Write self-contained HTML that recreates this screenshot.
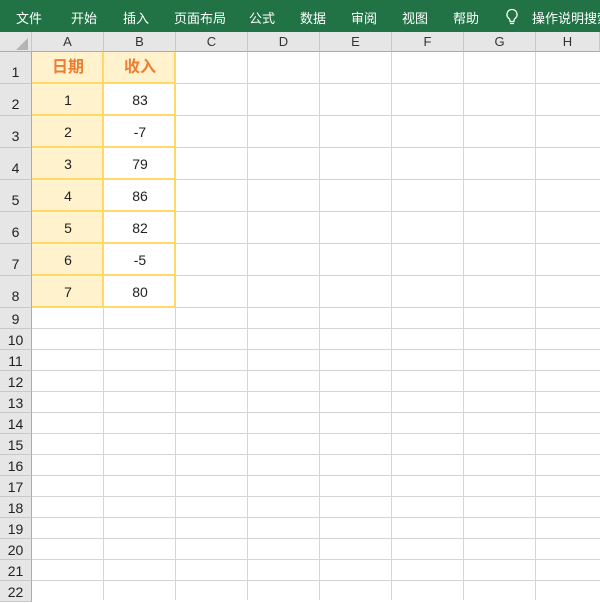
<!DOCTYPE html>
<html><head><meta charset="utf-8"><style>
*{margin:0;padding:0;box-sizing:border-box}
body{width:600px;height:600px;overflow:hidden;background:#fff;position:relative;font-family:"Liberation Sans","Noto Sans CJK SC",sans-serif}
.rib{position:absolute;left:0;top:0;width:600px;height:32px;background:#217346;color:#fff;font-size:13px}
.rib span{position:absolute;top:8px;white-space:nowrap}
.ab{position:absolute}
.ch{position:absolute;top:32px;height:20px;background:#e6e6e6;border-right:1px solid #c8c8c8;border-bottom:1px solid #ababab;text-align:center;font-size:13px;line-height:20px;color:#333}
.rh{position:absolute;left:0;width:32px;background:#e6e6e6;border-right:1px solid #ababab;border-bottom:1px solid #c8c8c8;text-align:center;font-size:14px;color:#222}
.vl{position:absolute;top:52px;width:1px;height:548px;background:#d4d4d4}
.hl{position:absolute;left:32px;width:568px;height:1px;background:#d4d4d4}
.c{position:absolute;text-align:center;font-size:14px;color:#222;line-height:30px}
</style></head><body>
<div class="rib">
<span style="left:16px">文件</span><span style="left:71px">开始</span><span style="left:123px">插入</span><span style="left:174px">页面布局</span><span style="left:249px">公式</span><span style="left:300px">数据</span><span style="left:351px">审阅</span><span style="left:402px">视图</span><span style="left:453px">帮助</span>
<svg class="ab" style="left:505px;top:8px" width="14" height="18" viewBox="0 0 14 18"><path d="M7 1.5a5 5 0 0 0-3 9c.6.5 1 1.2 1 2v1h4v-1c0-.8.4-1.5 1-2a5 5 0 0 0-3-9zM5 15.5h4" fill="none" stroke="#fff" stroke-width="1.3"/></svg>
<span style="left:532px">操作说明搜索</span>
</div>
<div class="ch" style="left:0;width:32px;background:#e6e6e6"><svg class="ab" style="left:16px;top:6px" width="12" height="12"><path d="M12 0V12H0Z" fill="#b4b4b4"/></svg></div>
<div class="ch" style="left:32px;width:72px">A</div>
<div class="ch" style="left:104px;width:72px">B</div>
<div class="ch" style="left:176px;width:72px">C</div>
<div class="ch" style="left:248px;width:72px">D</div>
<div class="ch" style="left:320px;width:72px">E</div>
<div class="ch" style="left:392px;width:72px">F</div>
<div class="ch" style="left:464px;width:72px">G</div>
<div class="ch" style="left:536px;width:64px">H</div>
<!-- gridlines -->
<div class="vl" style="left:103px"></div><div class="vl" style="left:175px"></div><div class="vl" style="left:247px"></div><div class="vl" style="left:319px"></div><div class="vl" style="left:391px"></div><div class="vl" style="left:463px"></div><div class="vl" style="left:535px"></div>
<div class="hl" style="top:83px"></div><div class="hl" style="top:115px"></div><div class="hl" style="top:147px"></div><div class="hl" style="top:179px"></div><div class="hl" style="top:211px"></div><div class="hl" style="top:243px"></div><div class="hl" style="top:275px"></div><div class="hl" style="top:307px"></div>
<div class="hl" style="top:328px"></div><div class="hl" style="top:349px"></div><div class="hl" style="top:370px"></div><div class="hl" style="top:391px"></div><div class="hl" style="top:412px"></div><div class="hl" style="top:433px"></div><div class="hl" style="top:454px"></div><div class="hl" style="top:475px"></div><div class="hl" style="top:496px"></div><div class="hl" style="top:517px"></div><div class="hl" style="top:538px"></div><div class="hl" style="top:559px"></div><div class="hl" style="top:580px"></div>
<!-- row headers -->
<div class="rh" style="top:52px;height:32px;line-height:40px">1</div>
<div class="rh" style="top:84px;height:32px;line-height:40px">2</div>
<div class="rh" style="top:116px;height:32px;line-height:40px">3</div>
<div class="rh" style="top:148px;height:32px;line-height:40px">4</div>
<div class="rh" style="top:180px;height:32px;line-height:40px">5</div>
<div class="rh" style="top:212px;height:32px;line-height:40px">6</div>
<div class="rh" style="top:244px;height:32px;line-height:40px">7</div>
<div class="rh" style="top:276px;height:32px;line-height:40px">8</div>
<div class="rh" style="top:308px;height:21px;line-height:22px">9</div>
<div class="rh" style="top:329px;height:21px;line-height:22px">10</div>
<div class="rh" style="top:350px;height:21px;line-height:22px">11</div>
<div class="rh" style="top:371px;height:21px;line-height:22px">12</div>
<div class="rh" style="top:392px;height:21px;line-height:22px">13</div>
<div class="rh" style="top:413px;height:21px;line-height:22px">14</div>
<div class="rh" style="top:434px;height:21px;line-height:22px">15</div>
<div class="rh" style="top:455px;height:21px;line-height:22px">16</div>
<div class="rh" style="top:476px;height:21px;line-height:22px">17</div>
<div class="rh" style="top:497px;height:21px;line-height:22px">18</div>
<div class="rh" style="top:518px;height:21px;line-height:22px">19</div>
<div class="rh" style="top:539px;height:21px;line-height:22px">20</div>
<div class="rh" style="top:560px;height:21px;line-height:22px">21</div>
<div class="rh" style="top:581px;height:21px;line-height:22px">22</div>
<!-- table -->
<div class="ab" style="left:32px;top:52px;width:72px;height:256px;background:#fff2cc"></div>
<div class="ab" style="left:104px;top:52px;width:72px;height:32px;background:#fff2cc"></div>
<div class="ab" style="left:102px;top:52px;width:2px;height:256px;background:#ffd966"></div>
<div class="ab" style="left:174px;top:52px;width:2px;height:256px;background:#ffd966"></div>
<div class="ab" style="left:32px;top:82px;width:144px;height:2px;background:#ffd966"></div>
<div class="ab" style="left:32px;top:114px;width:144px;height:2px;background:#ffd966"></div>
<div class="ab" style="left:32px;top:146px;width:144px;height:2px;background:#ffd966"></div>
<div class="ab" style="left:32px;top:178px;width:144px;height:2px;background:#ffd966"></div>
<div class="ab" style="left:32px;top:210px;width:144px;height:2px;background:#ffd966"></div>
<div class="ab" style="left:32px;top:242px;width:144px;height:2px;background:#ffd966"></div>
<div class="ab" style="left:32px;top:274px;width:144px;height:2px;background:#ffd966"></div>
<div class="ab" style="left:32px;top:306px;width:144px;height:2px;background:#ffd966"></div>
<div class="c" style="left:32px;top:53px;width:72px;color:#ed7d31;font-weight:bold;font-size:16px">日期</div>
<div class="c" style="left:104px;top:53px;width:72px;color:#ed7d31;font-weight:bold;font-size:16px">收入</div>
<div class="c" style="left:32px;top:85px;width:72px">1</div><div class="c" style="left:104px;top:85px;width:72px">83</div>
<div class="c" style="left:32px;top:117px;width:72px">2</div><div class="c" style="left:104px;top:117px;width:72px">-7</div>
<div class="c" style="left:32px;top:149px;width:72px">3</div><div class="c" style="left:104px;top:149px;width:72px">79</div>
<div class="c" style="left:32px;top:181px;width:72px">4</div><div class="c" style="left:104px;top:181px;width:72px">86</div>
<div class="c" style="left:32px;top:213px;width:72px">5</div><div class="c" style="left:104px;top:213px;width:72px">82</div>
<div class="c" style="left:32px;top:245px;width:72px">6</div><div class="c" style="left:104px;top:245px;width:72px">-5</div>
<div class="c" style="left:32px;top:277px;width:72px">7</div><div class="c" style="left:104px;top:277px;width:72px">80</div>
</body></html>
